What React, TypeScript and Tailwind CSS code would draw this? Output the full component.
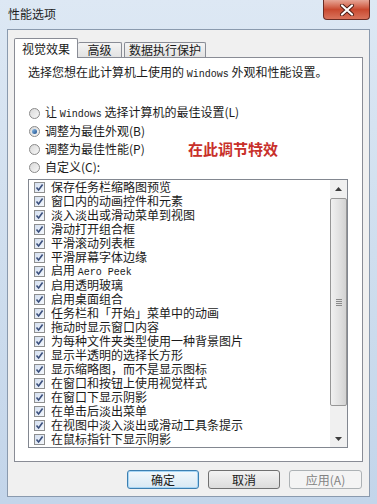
import React from 'react'

const items = [
  '保存任务栏缩略图预览',
  '窗口内的动画控件和元素',
  '淡入淡出或滑动菜单到视图',
  '滑动打开组合框',
  '平滑滚动列表框',
  '平滑屏幕字体边缘',
  '启用 Aero Peek',
  '启用透明玻璃',
  '启用桌面组合',
  '任务栏和「开始」菜单中的动画',
  '拖动时显示窗口内容',
  '为每种文件夹类型使用一种背景图片',
  '显示半透明的选择长方形',
  '显示缩略图，而不是显示图标',
  '在窗口和按钮上使用视觉样式',
  '在窗口下显示阴影',
  '在单击后淡出菜单',
  '在视图中淡入淡出或滑动工具条提示',
  '在鼠标指针下显示阴影',
]

const font = "font-['Noto_Sans_CJK_SC','Liberation_Sans',sans-serif]"

function Radio({ checked }: { checked?: boolean }) {
  return (
    <span className="flex h-[11px] w-[11px] shrink-0 items-center justify-center rounded-full border border-[#8a8a8a] bg-gradient-to-br from-[#d9d9d9] to-[#f7f7f7]">
      {checked && (
        <span className="h-[5px] w-[5px] rounded-full bg-gradient-to-br from-[#8fc1ea] to-[#1c4f8e]" />
      )}
    </span>
  )
}

function Check() {
  return (
    <span className="flex h-[11px] w-[11px] shrink-0 items-center justify-center border border-[#8e8f8f] bg-gradient-to-br from-[#d4dff0] to-[#f5f8fc]">
      <svg width="9" height="9" viewBox="0 0 9 9">
        <path d="M1.5 4.5 L3.6 7 L7.6 1.5" fill="none" stroke="#3a4f7c" strokeWidth="1.6" />
      </svg>
    </span>
  )
}

function Label({ text }: { text: string }) {
  // latin words render in a narrow mono face like the old SimSun glyphs
  const parts = text.split(/([A-Za-z]{2,}(?: [A-Za-z]+)*)/)
  return (
    <span className="whitespace-pre leading-[14px]">
      {parts.map((p, i) =>
        /^[A-Za-z ]+$/.test(p) && p.trim() ? (
          <span key={i} className="font-['Liberation_Mono',monospace] text-[10px]">
            {p}
          </span>
        ) : (
          <span key={i}>{p}</span>
        )
      )}
    </span>
  )
}

export default function App() {
  return (
    <div className={`flex h-[504px] w-[377px] flex-col bg-gradient-to-b from-[#dde8f4] via-[#cfdeee] to-[#c3d5ea] ${font} text-[12px] text-[#1a1a1a]`}>
      {/* title bar */}
      <div className="flex h-[29px] shrink-0 items-start justify-between pr-[7px]">
        <span className="pl-[8px] pt-[6px] leading-[16px] text-[#1e1e1e]">性能选项</span>
        <div className="flex h-[20px] w-[47px] items-center justify-center rounded-b-[4px] border border-t-0 border-[#6a2c24] bg-gradient-to-b from-[#e6a596] via-[#c9492f] to-[#d9735c]">
          <svg width="16" height="12" viewBox="0 0 16 12">
            <path d="M3 1.5 L13 10.5 M13 1.5 L3 10.5" stroke="#4a1a12" strokeWidth="4" strokeLinecap="round" />
            <path d="M3 1.5 L13 10.5 M13 1.5 L3 10.5" stroke="#ffffff" strokeWidth="2.2" strokeLinecap="round" />
          </svg>
        </div>
      </div>

      {/* client area */}
      <div className="mx-[7px] flex h-[468px] shrink-0 flex-col border border-[#8a9aae] bg-[#f0f0f0]">
        {/* tabs */}
        <div className="mt-[8px] flex h-[19px] items-end pl-[6px]">
          <div className="relative z-10 mb-[-1px] flex h-[20px] w-[64px] items-center justify-center rounded-t-[2px] border border-b-0 border-[#898c95] bg-white">
            视觉效果
          </div>
          <div className="flex h-[15px] w-[44px] items-center justify-center rounded-t-[2px] border border-b-0 border-l-0 border-[#898c95] bg-gradient-to-b from-[#f4f4f4] to-[#e2e2e2] leading-[14px]">
            高级
          </div>
          <div className="ml-[2px] flex h-[15px] w-[82px] items-center justify-center rounded-t-[2px] border border-b-0 border-[#898c95] bg-gradient-to-b from-[#f4f4f4] to-[#e2e2e2] leading-[14px]">
            数据执行保护
          </div>
        </div>

        {/* panel */}
        <div className="ml-[6px] flex h-[405px] w-[349px] flex-col border border-[#898c95] bg-white pl-[13px]">
          <div className="mt-[7px] flex h-[16px] items-center">
            <Label text="选择您想在此计算机上使用的 Windows 外观和性能设置。" />
          </div>

          <div className="mt-[23px] flex flex-col pl-[1px]">
            <div className="flex h-[18px] items-center gap-[5px]">
              <Radio />
              <Label text="让 Windows 选择计算机的最佳设置(L)" />
            </div>
            <div className="flex h-[18px] items-center gap-[5px]">
              <Radio checked />
              <Label text="调整为最佳外观(B)" />
            </div>
            <div className="flex h-[18px] items-center">
              <div className="flex w-[159px] items-center gap-[5px]">
                <Radio />
                <Label text="调整为最佳性能(P)" />
              </div>
              <span className="text-[15px] font-bold leading-[18px] text-[#c8302a]">在此调节特效</span>
            </div>
            <div className="flex h-[18px] items-center gap-[5px]">
              <Radio />
              <Label text="自定义(C):" />
            </div>
          </div>

          {/* list box */}
          <div className="mt-[3px] flex h-[269px] w-[320px] border border-[#828790] bg-white">
            <div className="flex flex-1 flex-col pl-[5px]">
              {items.map((t) => (
                <div key={t} className="flex h-[14px] items-center gap-[6px]">
                  <Check />
                  <Label text={t} />
                </div>
              ))}
            </div>
            <div className="flex w-[17px] flex-col bg-[#f0f0f0]">
              <div className="flex h-[17px] items-center justify-center">
                <svg width="7" height="4" viewBox="0 0 7 4">
                  <path d="M0 4 L3.5 0 L7 4 Z" fill="#3c3c3c" />
                </svg>
              </div>
              <div className="mt-[1px] flex h-[208px] items-center justify-center rounded-[2px] border border-[#979797] bg-gradient-to-r from-[#f1f1f1] via-[#e3e3e3] to-[#d2d2d2]">
                <div className="flex flex-col gap-[1px]">
                  <span className="h-[1px] w-[6px] bg-[#8a8a8a]" />
                  <span className="h-[1px] w-[6px] bg-[#8a8a8a]" />
                  <span className="h-[1px] w-[6px] bg-[#8a8a8a]" />
                  <span className="h-[1px] w-[6px] bg-[#8a8a8a]" />
                </div>
              </div>
              <div className="flex-1" />
              <div className="flex h-[17px] items-center justify-center">
                <svg width="7" height="4" viewBox="0 0 7 4">
                  <path d="M0 0 L3.5 4 L7 0 Z" fill="#3c3c3c" />
                </svg>
              </div>
            </div>
          </div>
        </div>

        {/* buttons */}
        <div className="mt-[8px] flex justify-end gap-[9px] pr-[7px]">
          <button className="flex h-[19px] w-[72px] items-center justify-center rounded-[3px] border border-[#3c7fb1] bg-gradient-to-b from-[#f2f8fc] to-[#d7e8f4] leading-[14px] shadow-[inset_0_0_0_1px_#a8d6f5]">
            确定
          </button>
          <button className="flex h-[19px] w-[72px] items-center justify-center rounded-[3px] border border-[#707070] bg-gradient-to-b from-[#f3f3f3] to-[#dcdcdc] leading-[14px]">
            取消
          </button>
          <button className="flex h-[19px] w-[73px] items-center justify-center rounded-[3px] border border-[#adb2b5] bg-[#f4f4f4] text-[#838383]">
            <Label text="应用(A)" />
          </button>
        </div>
      </div>
    </div>
  )
}
